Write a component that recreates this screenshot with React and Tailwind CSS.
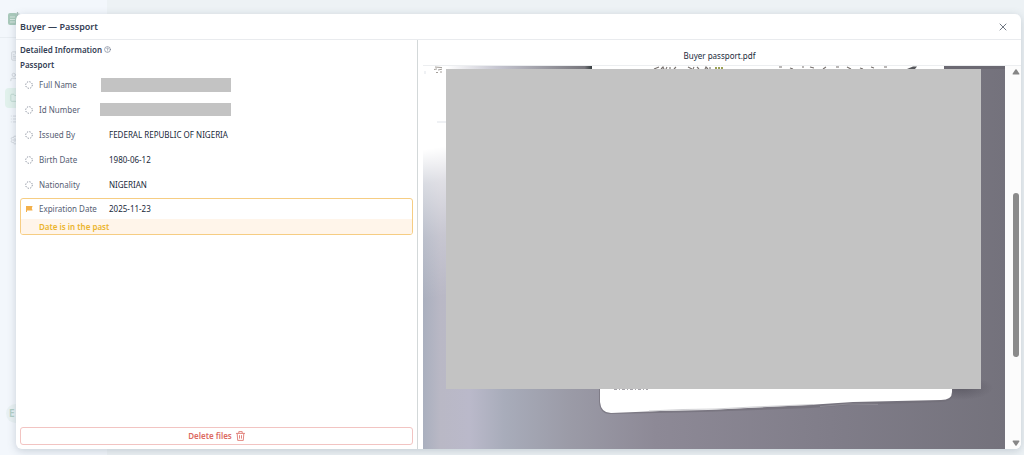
import React from 'react';
import { CircleHelp, Folder, FileText, Users, List, Settings, X } from 'lucide-react';

const fields = [
  { label: 'Full Name', hidden: 'h-[14px] w-[130px]' },
  { label: 'Id Number', hidden: 'h-[13px] w-[131px] -ml-px' },
  { label: 'Issued By', value: 'FEDERAL REPUBLIC OF NIGERIA' },
  { label: 'Birth Date', value: '1980-06-12' },
  { label: 'Nationality', value: 'NIGERIAN' },
];

const navItems = [
  { name: 'Documents', Icon: FileText },
  { name: 'Clients', Icon: Users },
  { name: 'Files', Icon: Folder, active: true },
  { name: 'Tasks', Icon: List },
  { name: 'Settings', Icon: Settings },
];

const PendingIcon = () => (
  <svg viewBox="0 0 8 8" className="size-2 shrink-0" fill="none" stroke="#6b7484" strokeWidth="0.8">
    <circle cx="4" cy="4" r="3.3" strokeDasharray="1.3 1.29" />
  </svg>
);

const FlagIcon = () => (
  <svg viewBox="0 0 8 8" className="size-2 shrink-0" fill="#f3b04a">
    <path d="M1 1h6.6L6.8 3.2l.8 2.3H2V7H1z" />
  </svg>
);

const TrashIcon = () => (
  <svg viewBox="0 0 9 10" className="h-[10px] w-[9px]" fill="none" stroke="#dc6a62" strokeWidth="0.8">
    <path d="M0 2.4h9M2.8 2.2V.6h3.4v1.6M1.2 2.6l.5 6.8h5.6l.5-6.8M3.5 4.2v3.4M5.5 4.2v3.4" />
  </svg>
);

const Sidebar = () => (
  <aside className="flex w-[107px] shrink-0 flex-col bg-[#f3f7fc]">
    <div className="flex h-[38px] items-center border-b border-[#e8edf2] pl-2">
      <svg viewBox="0 0 12 14" className="h-[14px] w-3">
        <rect x="0" y="1" width="9" height="12" rx="2" fill="#a9c9bb" />
        <path d="M2 5h5M2 7.5h5M2 10h5" stroke="#e3efea" strokeWidth="0.8" />
        <path d="M9.5 0v4M7.5 2h4" stroke="#a9bfb8" strokeWidth="1.2" />
      </svg>
    </div>
    <nav className="flex flex-col gap-px pt-2 pl-[5px]">
      {navItems.map(({ name, Icon, active }) => (
        <a
          key={name}
          href="#"
          aria-label={name}
          className={`flex h-5 items-center rounded pl-[5px] ${active ? 'bg-[#e1f1ec] text-[#b5d3c8]' : 'text-[#c9cfd6]'}`}
        >
          <Icon className="size-[10px]" strokeWidth={1.8} />
        </a>
      ))}
    </nav>
    <div className="mt-auto mb-8 ml-[6px] flex size-[19px] items-center rounded-full bg-[#e9f1f3] pl-[3px] text-[10px] font-semibold text-[#b3cfc5]">
      E
    </div>
  </aside>
);

const FieldRow = ({ label, value, hidden }) => (
  <div className="flex h-[25px] items-center pl-[5px]">
    <PendingIcon />
    <dt className="ml-[6px] w-[62px] text-[#566073]">{label}</dt>
    <dd className={hidden ? '' : 'pl-2'}>{hidden ? <div className={`bg-[#c3c3c3] ${hidden}`} /> : value}</dd>
  </div>
);

const ScanPreview = () => (
  <svg viewBox="0 0 582 383" preserveAspectRatio="none" className="h-full w-full" role="img" aria-label="Passport scan">
    <defs>
      <linearGradient id="desk" x1="0" x2="1" y1="0" y2="0">
        <stop offset="0" stopColor="#a9afbe" />
        <stop offset="0.03" stopColor="#b9b8c5" />
        <stop offset="0.08" stopColor="#bab9ca" />
        <stop offset="0.14" stopColor="#a8acba" />
        <stop offset="0.25" stopColor="#9b9ba7" />
        <stop offset="0.4" stopColor="#8d8996" />
        <stop offset="0.7" stopColor="#807d89" />
        <stop offset="1" stopColor="#74727c" />
      </linearGradient>
      <linearGradient id="glare" gradientUnits="userSpaceOnUse" x1="0" x2="40" y1="0" y2="240">
        <stop offset="0" stopColor="#fff" />
        <stop offset="0.34" stopColor="#fff" />
        <stop offset="0.48" stopColor="#fff" stopOpacity="0.55" />
        <stop offset="0.7" stopColor="#fff" stopOpacity="0.2" />
        <stop offset="0.95" stopColor="#fff" stopOpacity="0" />
      </linearGradient>
      <linearGradient id="topEdge" x1="0" x2="1" y1="0" y2="0">
        <stop offset="0" stopColor="#fff" />
        <stop offset="0.35" stopColor="#c5c5d0" />
        <stop offset="0.95" stopColor="#77767c" />
        <stop offset="1" stopColor="#343b3d" />
      </linearGradient>
      <radialGradient id="cardShade">
        <stop offset="0" stopColor="#56545e" stopOpacity="0.7" />
        <stop offset="1" stopColor="#56545e" stopOpacity="0" />
      </radialGradient>
    </defs>
    <rect width="582" height="383" fill="url(#desk)" />
    <rect width="26" height="240" fill="url(#glare)" />
    <rect width="24" height="5" fill="#fff" />
    <path d="M2 5v3M14 56h9" stroke="#c9d0da" strokeWidth="0.6" />
    <path d="M12 1l7 .6M11 3.5l3-.6M15 4l4-.8M13 6.5h2M17 6h2" stroke="#a39e99" strokeWidth="1" />
    <rect x="24" width="145" height="4" fill="url(#topEdge)" />
    <rect x="169" width="352" height="4" fill="#fff" />
    <path
      d="M231 3l5-2M238 3l2-2 1 2M243 3l1-2M247 3V1M251 3l2-2M265 1l4 2M271 1l-1 2M274 1l2 2M282 3l1-2 2 2M287 3V1M356 1h3M367 2l3 1M379 1h2M387 1l4 1M400 3l3-2M413 1h3M424 1l4 2M437 2l3 1M448 1l3 1M461 1h3"
      stroke="#77716e"
      strokeWidth="1.1"
      fill="none"
    />
    <path d="M292 2h8" stroke="#9aa054" strokeWidth="2" strokeDasharray="2 1" fill="none" />
    <path d="M484 3l6-2.5h4l-2 2.5z" fill="#55565a" />
    <rect x="521" width="61" height="3" fill="#6b6972" />
    <ellipse cx="538" cy="322" rx="32" ry="12" fill="url(#cardShade)" />
    <path d="M176 320v16q1 12 11 12l90-2 110-4 40-3 90-3q12 0 13-8v-8z" fill="#6f6d77" opacity="0.6" />
    <path d="M177 320v16q1 11 11 11l49-2 48-1 40-2 60-3 45-3 88-2q11 0 11-8v-6z" fill="#fff" />
    <path d="M226 345l34-1.5 32-.5 38-2 24-1 36-1.5" stroke="#c7c6ca" strokeWidth="0.8" fill="none" />
    <path d="M397 340.5l28-2.5 30 .4" stroke="#94929a" strokeWidth="0.8" fill="none" />
    <path d="M191 323.5h34" stroke="#a5a3a9" strokeWidth="1" strokeDasharray="3 2 1 2" />
    <rect x="23" y="3" width="535" height="320" fill="#c3c3c3" />
  </svg>
);

const Scrollbar = () => (
  <div className="flex w-4 shrink-0 flex-col items-center bg-[#fcfcfc] py-[3px] pl-[5px]">
    <svg viewBox="0 0 8 6" className="h-[6px] w-2" fill="#868686">
      <path d="M3.4.6q.6-.8 1.2 0L7.3 4.6q.4 1-.6 1H1.3q-1 0-.6-1z" />
    </svg>
    <div className="flex-[118]" />
    <div className="w-[6px] flex-[164] rounded-full bg-[#8b8b8b]" />
    <div className="flex-[83]" />
    <svg viewBox="0 0 8 6" className="h-[6px] w-2" fill="#868686">
      <path d="M3.4 5.4q.6.8 1.2 0L7.3 1.4q.4-1-.6-1H1.3q-1 0-.6 1z" />
    </svg>
  </div>
);

const App = () => {
  return (
    <div className="relative flex h-screen overflow-hidden bg-[#edf2f5] font-['Noto_Sans',sans-serif] text-[8px] text-[#20293a]">
      <Sidebar />
      <main className="flex-1" />

      <div
        role="dialog"
        aria-labelledby="dialog-title"
        className="absolute inset-x-0 top-[14px] bottom-[6px] mr-[3px] ml-4 flex flex-col overflow-hidden rounded-md bg-white shadow-[0_2px_8px_rgba(70,90,110,0.25)]"
      >
        <header className="flex h-[26px] shrink-0 items-center justify-between border-b border-[#e9ebee] pr-3 pl-1">
          <h1 id="dialog-title" className="text-[9px] font-semibold text-[#344054]">
            Buyer — Passport
          </h1>
          <button aria-label="Close" className="text-[#4b5563]">
            <X className="size-3" strokeWidth={1.6} />
          </button>
        </header>

        <div className="flex min-h-0 flex-1">
          <section className="flex w-[402px] shrink-0 flex-col border-r border-[#d3d8d9] px-1 pt-[2px] pb-1">
            <h2 className="flex h-[15px] items-center gap-[2px] font-semibold text-[#344054]">
              Detailed Information
              <CircleHelp className="size-[7px] text-[#667085]" strokeWidth={2} />
            </h2>
            <h3 className="flex h-[15px] items-center font-semibold text-[#344054]">Passport</h3>
            <dl>
              {fields.map((field) => (
                <FieldRow key={field.label} {...field} />
              ))}
              <div className="mt-px overflow-hidden rounded-[3px] border border-[#f6cd83]">
                <div className="flex h-5 items-center pl-1">
                  <FlagIcon />
                  <dt className="ml-[6px] w-[62px] text-[#566073]">Expiration Date</dt>
                  <dd className="pl-2">2025-11-23</dd>
                </div>
                <p className="flex h-[15px] items-center bg-[#fff5ea] pl-[18px] font-semibold text-[#ebb42c]">
                  Date is in the past
                </p>
              </div>
            </dl>
            <button className="mt-auto flex h-[18px] items-center justify-center gap-1 rounded-[3px] border border-[#f2c4c2] font-semibold text-[#dc6a62]">
              Delete files
              <TrashIcon />
            </button>
          </section>

          <section className="flex min-w-0 flex-1 flex-col">
            <h2 className="flex h-[25px] shrink-0 items-end justify-center pb-[3px]">Buyer passport.pdf</h2>
            <div className="ml-[5px] flex min-h-0 flex-1 border-t border-[#eceef0]">
              <div className="min-w-0 flex-1">
                <ScanPreview />
              </div>
              <Scrollbar />
            </div>
          </section>
        </div>
      </div>
    </div>
  );
};

export default App;
